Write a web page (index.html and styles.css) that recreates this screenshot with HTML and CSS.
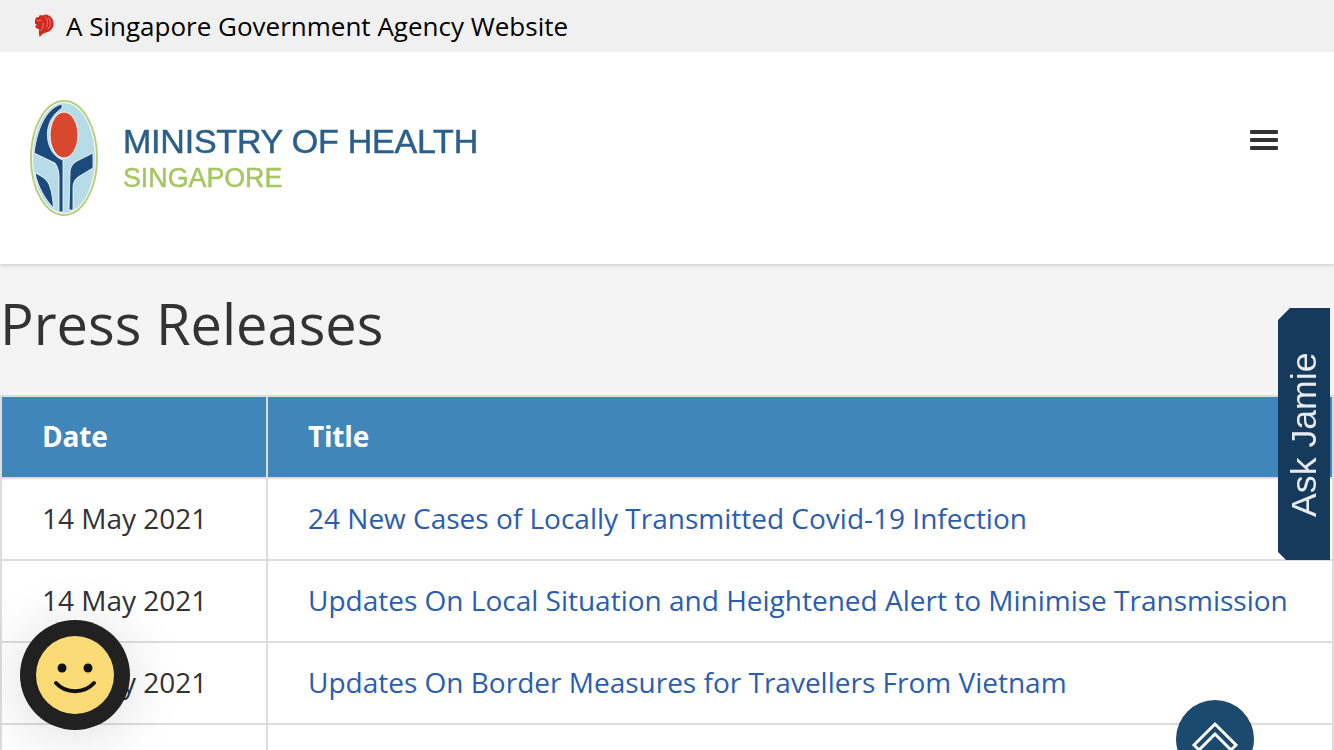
FILE: index.html
```html
<!DOCTYPE html>
<html lang="en">
<head>
<meta charset="utf-8">
<title>Press Releases</title>
<link rel="stylesheet" href="styles.css">
</head>
<body>
<div class="masthead">
  <svg class="lion" viewBox="0 0 22 26" aria-hidden="true">
    <path fill="#d3281f" d="M1 7 L2 3.500 L5 3 L6 1 L9 1.500 L12 0.500 C17 1 20.500 5 20.500 10 C20.500 15 16.500 18.500 12 19.500 C9.500 20.200 8 21.500 6 24 C5 21.500 4.800 19 5.500 16 C3.500 15.500 1.800 14.500 1 13 L3 11.500 L1 10 Z"/>
    <path fill="none" stroke="#f2b5ae" stroke-width=".6" d="M3 7 L8 6.500 M11 3 C14.500 5 15.500 10 12.500 14 M14.500 3.500 C18 6 18 12 14.500 16 M9.500 9 C10.500 12 8.500 15 7 18"/>
  </svg>
  <span>A Singapore Government Agency Website</span>
</div>
<header class="site-header">
  <a class="logo" href="#">
    <svg class="crest" viewBox="0 0 70 118" aria-hidden="true">
      <ellipse cx="35" cy="59" rx="33" ry="57" fill="#fff" stroke="#b5cf7e" stroke-width="2"/>
      <ellipse cx="35" cy="59" rx="31" ry="55" fill="#b8dbe8"/>
      <path fill="#1b4a7c" stroke="#fff" stroke-width=".8" d="M33 5 C20 8 9 24 5 54 L26 64 C29 68 30 73 30 78 L30 113 L34 113 L34 61 C27 59 21 52 19 42 C17 30 20 18 33 9 Z"/>
      <path fill="#1b4a7c" stroke="#fff" stroke-width=".8" d="M64 54 L48 62 C43 65 41 69 41 74 L40 111 L44 111 L44 88 C44 84 46 80 49 78 L64 69 Z"/>
      <path fill="#1b4a7c" stroke="#fff" stroke-width=".8" d="M6 74 C13 77 19 81 21 88 C23 94 24 101 24.500 109 C16 100 9 88 6 74 Z"/>
      <ellipse cx="35" cy="36" rx="14" ry="23" fill="#d9472f" stroke="#fff" stroke-width="1"/>
    </svg>
    <span class="logo-text">
      <span class="logo-name">MINISTRY OF HEALTH</span>
      <span class="logo-sub">SINGAPORE</span>
    </span>
  </a>
  <button class="menu" aria-label="Menu"><i></i><i></i><i></i></button>
</header>
<main>
  <h1>Press Releases</h1>
  <table class="releases">
    <thead>
      <tr><th class="col-date">Date</th><th>Title</th></tr>
    </thead>
    <tbody>
      <tr><td>14 May 2021</td><td><a href="#">24 New Cases of Locally Transmitted Covid-19 Infection</a></td></tr>
      <tr><td>14 May 2021</td><td><a href="#">Updates On Local Situation and Heightened Alert to Minimise Transmission</a></td></tr>
      <tr><td>14 May 2021</td><td><a href="#">Updates On Border Measures for Travellers From Vietnam</a></td></tr>
      <tr><td>&nbsp;</td><td>&nbsp;</td></tr>
    </tbody>
  </table>
</main>
<a class="ask-jamie" href="#"><span>Ask Jamie</span></a>
<button class="smiley" aria-label="Feedback">
  <svg viewBox="0 0 78 78" aria-hidden="true">
    <circle cx="39" cy="39" r="39" fill="#fadb76"/>
    <circle cx="26" cy="32" r="4.500" fill="#111"/>
    <circle cx="52" cy="32" r="4.500" fill="#111"/>
    <path d="M20 47 C30 58 48 58 58 47" fill="none" stroke="#111" stroke-width="4" stroke-linecap="round"/>
  </svg>
</button>
<a class="to-top" href="#" aria-label="Back to top">
  <svg viewBox="0 0 78 78" aria-hidden="true">
    <path d="M18 45 L39 24 L60 45 L55 50 L39 34 L23 50 Z" fill="none" stroke="#fff" stroke-width="3"/>
  </svg>
</a>
</body>
</html>
```
FILE: styles.css
```css
* { box-sizing: border-box; }
html, body { margin: 0; height: 750px; overflow: hidden; }
body {
  position: relative;
  background: #f4f4f4;
  color: #333;
  font-family: "Open Sans", "Liberation Sans", sans-serif;
}
.masthead {
  position: relative;
  z-index: 1;
  height: 52px;
  background: #f0f0f0;
  display: flex;
  align-items: center;
  gap: 11px;
  padding-left: 34px;
  color: #000;
  font-size: 26px;
}
.lion { width: 21px; height: 25px; }
.site-header {
  height: 212px;
  background: #fff;
  box-shadow: 0 1px 4px rgba(0,0,0,.18);
  display: flex;
  align-items: center;
  justify-content: space-between;
  padding: 0 56px 0 29px;
  position: relative;
}
.logo {
  display: flex;
  align-items: center;
  gap: 24px;
  text-decoration: none;
  filter: blur(.6px);
}
.crest { width: 70px; height: 118px; }
.logo-text { display: flex; flex-direction: column; font-family: "Liberation Sans", Arial, sans-serif; margin-top: 2px; }
.logo-name { color: #2a5f8a; font-size: 34px; line-height: 38px; letter-spacing: -.22px; white-space: nowrap; -webkit-text-stroke: .5px #2a5f8a; }
.logo-sub { color: #a6c663; font-size: 26.800px; line-height: 36px; -webkit-text-stroke: .5px #a6c663; }
.menu {
  background: none;
  border: 0;
  padding: 0;
  width: 28px;
  height: 20px;
  display: flex;
  flex-direction: column;
  justify-content: space-between;
  margin-bottom: 36px;
}
.menu i { display: block; height: 4px; background: #333; border-radius: 1px; }
h1 {
  margin: 0;
  padding: 22px 0 0;
  height: 131px;
  font-size: 56px;
  line-height: 74px;
  font-weight: 400;
  color: #333;
}
.releases {
  width: 1334px;
  table-layout: fixed;
  border-collapse: separate;
  border-spacing: 0;
  background: #fff;
  font-size: 28px;
  border-top: 2px solid #ddd;
  border-left: 2px solid #ddd;
}
.col-date { width: 266px; }
.releases th, .releases td {
  height: 82px;
  padding: 0 0 2px 40px;
  text-align: left;
  border-right: 2px solid #ddd;
  border-bottom: 2px solid #ddd;
  white-space: nowrap;
  overflow: hidden;
}
.releases th {
  background: #4086ba;
  color: #fff;
  font-weight: 700;
  letter-spacing: -.2px;
}
.releases td { color: #333; }
.releases a { color: #2a5db0; text-decoration: none; }
.ask-jamie {
  position: absolute;
  left: 1278px;
  top: 308px;
  width: 52px;
  height: 252px;
  background: #163a5c;
  clip-path: polygon(12px 0, 100% 0, 100% 100%, 8px 100%, 0 calc(100% - 8px), 0 12px);
  display: flex;
  justify-content: center;
  padding-top: 44px;
  text-decoration: none;
}
.ask-jamie span {
  writing-mode: vertical-rl;
  transform: rotate(180deg);
  color: #fff;
  font-family: "Liberation Sans", Arial, sans-serif;
  font-size: 35.700px;
  line-height: 52px;
  height: 165px;
  white-space: nowrap;
  opacity: .9;
  filter: blur(.4px);
}
.smiley {
  position: absolute;
  left: 20px;
  top: 620px;
  width: 110px;
  height: 110px;
  padding: 16px;
  border: 0;
  border-radius: 50%;
  background: #212121;
  box-shadow: 0 6px 60px rgba(0,0,0,.14);
}
.smiley svg { display: block; width: 78px; height: 78px; }
.to-top {
  position: absolute;
  left: 1176px;
  top: 700px;
  width: 78px;
  height: 78px;
  border-radius: 50%;
  background: #1c4a6e;
}
.to-top svg { display: block; width: 78px; height: 78px; }
```
